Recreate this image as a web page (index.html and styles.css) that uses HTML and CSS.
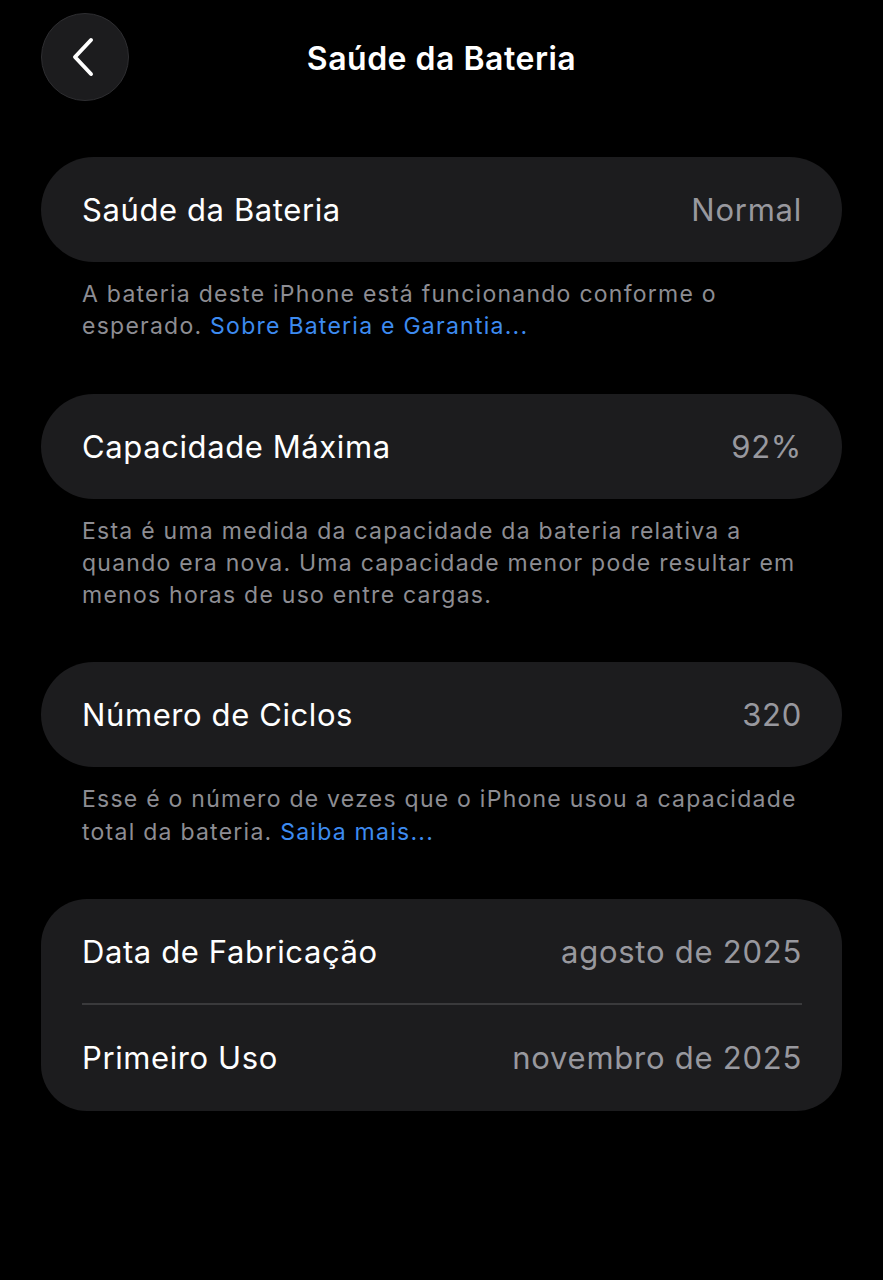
FILE: index.html
```html
<!DOCTYPE html>
<html lang="pt-BR">
<head>
<meta charset="utf-8">
<title>Saúde da Bateria</title>
<link rel="stylesheet" href="styles.css">
</head>
<body>
<div class="screen">
  <header class="nav">
    <button class="back" aria-label="Voltar">
      <svg width="28" height="40" viewBox="0 0 28 40" fill="none">
        <path d="M22 3 L6 20 L22 37" stroke="#ffffff" stroke-width="4" stroke-linecap="round" stroke-linejoin="round"/>
      </svg>
    </button>
    <h1 class="nav-title">Saúde da Bateria</h1>
  </header>

  <section class="group">
    <div class="card pill">
      <div class="row"><span class="label">Saúde da Bateria</span><span class="value">Normal</span></div>
    </div>
    <p class="footer">A bateria deste iPhone está funcionando conforme o esperado. <span class="link">Sobre Bateria e Garantia...</span></p>
  </section>

  <section class="group">
    <div class="card pill">
      <div class="row"><span class="label">Capacidade Máxima</span><span class="value">92%</span></div>
    </div>
    <p class="footer">Esta é uma medida da capacidade da bateria relativa a quando era nova. Uma capacidade menor pode resultar em menos horas de uso entre cargas.</p>
  </section>

  <section class="group">
    <div class="card pill">
      <div class="row"><span class="label">Número de Ciclos</span><span class="value">320</span></div>
    </div>
    <p class="footer">Esse é o número de vezes que o iPhone usou a capacidade total da bateria. <span class="link">Saiba mais...</span></p>
  </section>

  <section class="group">
    <div class="card rounded">
      <div class="row"><span class="label">Data de Fabricação</span><span class="value">agosto de 2025</span></div>
      <div class="divider"></div>
      <div class="row"><span class="label">Primeiro Uso</span><span class="value">novembro de 2025</span></div>
    </div>
  </section>
</div>
</body>
</html>
```

FILE: styles.css
```css
* { box-sizing: border-box; }
html, body {
  margin: 0;
  padding: 0;
  background: #000000;
}
body {
  font-family: Inter, "Noto Sans", "Liberation Sans", sans-serif;
  color: #ffffff;
  -webkit-font-smoothing: antialiased;
}
.screen {
  width: 883px;
  min-height: 1280px;
  padding: 13px 41px 0 41px;
}
.nav {
  position: relative;
  display: flex;
  align-items: center;
  justify-content: center;
  height: 88px;
  margin-bottom: 56px;
}
.back {
  position: absolute;
  left: 0;
  top: 0;
  width: 88px;
  height: 88px;
  border-radius: 50%;
  background: #1c1c1e;
  border: 1.5px solid #2e2e31;
  display: flex;
  align-items: center;
  justify-content: center;
  padding: 0 4px 0 0;
  cursor: pointer;
}
.nav-title {
  margin: 2px 0 0 0;
  font-size: 32px;
  font-weight: 600;
  letter-spacing: 0.5px;
  color: #ffffff;
}
.group {
  display: flex;
  flex-direction: column;
}
.card {
  background: #1c1c1e;
  padding: 0 40px 0 41px;
}
.pill {
  border-radius: 53px;
}
.rounded {
  border-radius: 46px;
}
.row {
  height: 105px;
  display: flex;
  align-items: center;
  justify-content: space-between;
}
.rounded .row { height: 104px; }
.rounded .row:last-child { height: 106px; }
.label {
  font-size: 31px;
  color: #ffffff;
  letter-spacing: 0.6px;
}
.value {
  font-size: 31px;
  color: #98989e;
  letter-spacing: 0.75px;
}
.divider {
  height: 1.5px;
  background: #3a3a3c;
}
.footer {
  margin: 16px 0 51px 0;
  padding: 0 20px 0 41px;
  font-size: 23px;
  line-height: 32.3px;
  color: #8d8d93;
  letter-spacing: 1.25px;
}
.link {
  color: #3d8bf0;
}
```
